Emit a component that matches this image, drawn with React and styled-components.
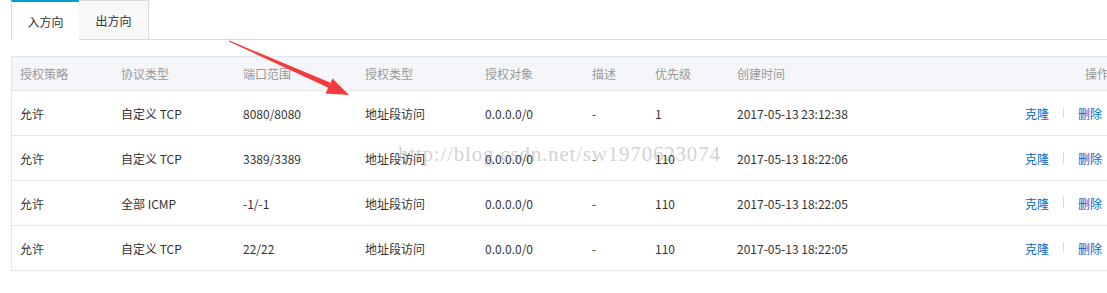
import React from "react";
import styled, { createGlobalStyle } from "styled-components";

const GlobalStyle = createGlobalStyle`
  html, body {
    margin: 0;
    padding: 0;
    background: #fff;
    overflow: hidden;
  }
  body {
    font-family: "Noto Sans CJK SC", "Noto Sans", sans-serif;
    font-size: 12px;
    color: #333;
  }
`;

const Page = styled.div`
  position: relative;
  width: 1107px;
  height: 293px;
  overflow: hidden;
  padding-left: 11px;
  box-sizing: border-box;
`;

const TabBar = styled.div`
  display: flex;
  height: 40px;
  box-sizing: border-box;
  border-bottom: 1px solid #dcdcdc;
  width: 1200px;
`;

const Tab = styled.div`
  display: flex;
  align-items: center;
  justify-content: center;
  height: 40px;
  box-sizing: border-box;
  color: #333;
  background: ${(p) => (p.$active ? "#fff" : "#f8f8f8")};
  border-top: ${(p) => (p.$active ? "2px solid #00a2ca" : "1px solid #dcdcdc")};
  border-left: ${(p) => (p.$active ? "1px solid #dcdcdc" : "none")};
  border-right: ${(p) => (p.$active ? "none" : "1px solid #dcdcdc")};
  border-bottom: ${(p) => (p.$active ? "1px solid #fff" : "1px solid #dcdcdc")};
  width: ${(p) => (p.$active ? "68px" : "70px")};
  padding-top: ${(p) => (p.$active ? "1px" : "0")};
`;

const Table = styled.div`
  margin-top: 16px;
  width: 1107px;
  border: 1px solid #e1e6eb;
  border-bottom: none;
`;

const cols = "101px 122px 122px 120px 107px 63px 82px 1fr auto";

const HeadRow = styled.div`
  display: grid;
  grid-template-columns: ${cols};
  height: 34px;
  box-sizing: border-box;
  background: #f5f6fa;
  border-bottom: 1px solid #e1e6eb;
  align-items: center;
  color: #999;
`;

const Row = styled.div`
  display: grid;
  grid-template-columns: ${cols};
  height: 45px;
  box-sizing: border-box;
  border-bottom: 1px solid #e1e6eb;
  align-items: center;
  color: #333;
`;

const Cell = styled.div`
  padding-left: 8px;
  white-space: nowrap;
  position: relative;
  z-index: 1;
`;

const HeadAction = styled(Cell)`
  padding-right: 10px;
  text-align: right;
`;

const Actions = styled.div`
  display: flex;
  align-items: center;
  justify-content: flex-end;
  padding-right: 17px;
  position: relative;
  z-index: 1;
`;

const Link = styled.a`
  color: #06c;
  text-decoration: none;
  cursor: pointer;
`;

const Sep = styled.span`
  width: 1px;
  height: 11px;
  margin: 0 14px 2px;
  background: #e0d9cc;
`;

const Watermark = styled.div`
  position: absolute;
  left: 398px;
  top: 142px;
  font-family: "Liberation Serif", serif;
  font-size: 21px;
  letter-spacing: 0.8px;
  color: rgba(190, 190, 190, 0.7);
  white-space: nowrap;
  pointer-events: none;
  z-index: 0;
`;

const Arrow = styled.svg`
  position: absolute;
  left: 0;
  top: 0;
  pointer-events: none;
  z-index: 3;
`;

const rows = [
  ["允许", "自定义 TCP", "8080/8080", "地址段访问", "0.0.0.0/0", "-", "1", "2017-05-13 23:12:38"],
  ["允许", "自定义 TCP", "3389/3389", "地址段访问", "0.0.0.0/0", "-", "110", "2017-05-13 18:22:06"],
  ["允许", "全部 ICMP", "-1/-1", "地址段访问", "0.0.0.0/0", "-", "110", "2017-05-13 18:22:05"],
  ["允许", "自定义 TCP", "22/22", "地址段访问", "0.0.0.0/0", "-", "110", "2017-05-13 18:22:05"],
];

const heads = ["授权策略", "协议类型", "端口范围", "授权类型", "授权对象", "描述", "优先级", "创建时间"];

export default function App() {
  return (
    <>
      <GlobalStyle />
      <Page>
        <TabBar>
          <Tab $active>入方向</Tab>
          <Tab>出方向</Tab>
        </TabBar>
        <Table>
          <HeadRow>
            {heads.map((h) => (
              <Cell key={h}>{h}</Cell>
            ))}
            <HeadAction>操作</HeadAction>
          </HeadRow>
          {rows.map((r, i) => (
            <Row key={i}>
              {r.map((c, j) => (
                <Cell key={j}>{c}</Cell>
              ))}
              <Actions>
                <Link>克隆</Link>
                <Sep />
                <Link>删除</Link>
              </Actions>
            </Row>
          ))}
        </Table>
        <Watermark>http://blog.csdn.net/sw1970623074</Watermark>
        <Arrow width="1107" height="293" viewBox="0 0 1107 293">
          <polygon
            points="229.2,40.5 330,82.5 329,88 228.8,41.5"
            fill="#f43b3b"
          />
          <polygon points="349,95 325.5,93.5 332.5,78.5" fill="#f43b3b" />
        </Arrow>
      </Page>
    </>
  );
}
